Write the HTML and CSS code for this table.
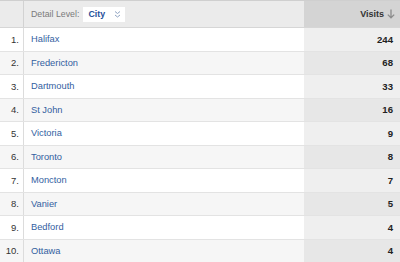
FILE: index.html
```html
<!DOCTYPE html>
<html>
<head>
<meta charset="utf-8">
<link rel="stylesheet" href="styles.css">
</head>
<body>
<div class="table">
  <div class="head">
    <div class="c-num"></div>
    <div class="c-name">
      <span class="label">Detail Level:</span>
      <span class="select"><b>City</b>
        <svg width="7" height="9" viewBox="0 0 7 9"><path d="M1 1.5 L3.5 3.5 L6 1.5 M1 5 L3.5 7 L6 5" fill="none" stroke="#8fa3c2" stroke-width="1"/></svg>
      </span>
    </div>
    <div class="c-val">Visits <svg class="arrow" width="8" height="10" viewBox="0 0 8 10"><path d="M4 0.5 V9 M0.8 5.6 L4 8.8 L7.2 5.6" fill="none" stroke="#8c8c8c" stroke-width="1.3"/></svg></div>
  </div>
  <div class="row"><div class="c-num">1.</div><div class="c-name"><a>Halifax</a></div><div class="c-val">244</div></div>
  <div class="row alt"><div class="c-num">2.</div><div class="c-name"><a>Fredericton</a></div><div class="c-val">68</div></div>
  <div class="row"><div class="c-num">3.</div><div class="c-name"><a>Dartmouth</a></div><div class="c-val">33</div></div>
  <div class="row alt"><div class="c-num">4.</div><div class="c-name"><a>St John</a></div><div class="c-val">16</div></div>
  <div class="row"><div class="c-num">5.</div><div class="c-name"><a>Victoria</a></div><div class="c-val">9</div></div>
  <div class="row alt"><div class="c-num">6.</div><div class="c-name"><a>Toronto</a></div><div class="c-val">8</div></div>
  <div class="row"><div class="c-num">7.</div><div class="c-name"><a>Moncton</a></div><div class="c-val">7</div></div>
  <div class="row alt"><div class="c-num">8.</div><div class="c-name"><a>Vanier</a></div><div class="c-val">5</div></div>
  <div class="row"><div class="c-num">9.</div><div class="c-name"><a>Bedford</a></div><div class="c-val">4</div></div>
  <div class="row alt"><div class="c-num">10.</div><div class="c-name"><a>Ottawa</a></div><div class="c-val">4</div></div>
</div>
</body>
</html>
```

FILE: styles.css
```css
html, body {
  margin: 0;
  padding: 0;
  background: #fff;
}
body {
  font-family: "Liberation Sans", Arial, sans-serif;
  font-size: 9.3px;
  color: #333;
  width: 400px;
  height: 262px;
  overflow: hidden;
}
.table {
  border-top: 1px solid #cfcfcf;
}
.head, .row {
  display: grid;
  grid-template-columns: 24px 280px 96px;
}
.head {
  height: 26px;
  background: #ebebeb;
  border-bottom: 1px solid #d6d6d6;
}
.row {
  height: 22.5px;
  border-bottom: 1px solid #e3e3e3;
  background: #fff;
}
.row.alt {
  background: #f6f6f6;
}
.c-num {
  border-right: 1px solid #dcdcdc;
  padding-right: 4px;
  display: flex;
  align-items: center;
  justify-content: flex-end;
  color: #333;
  font-size: 9.5px;
}
.c-name {
  display: flex;
  align-items: center;
  padding-left: 7px;
}
.c-name a {
  color: #33609f;
}
.c-val {
  display: flex;
  align-items: center;
  justify-content: flex-end;
  padding-right: 7px;
  font-weight: bold;
  font-size: 9.6px;
  color: #222;
  background: #efefef;
}
.row.alt .c-val {
  background: #e7e7e7;
}
.head .c-num {
  border-right-color: #d2d2d2;
}
.head .c-val {
  background: #d4d4d4;
  padding-right: 5px;
  color: #333;
  font-size: 9px;
  gap: 3px;
}
.head .c-name {
  font-size: 8.8px;
}
.label {
  color: #7a7a7a;
}
.select {
  margin-left: 4px;
  background: #fff;
  height: 15px;
  display: flex;
  align-items: center;
  padding: 0 4px 0 5px;
  gap: 9px;
  color: #1f4f9a;
}
.select b {
  font-weight: bold;
}
.select svg, .arrow {
  display: block;
}
```
